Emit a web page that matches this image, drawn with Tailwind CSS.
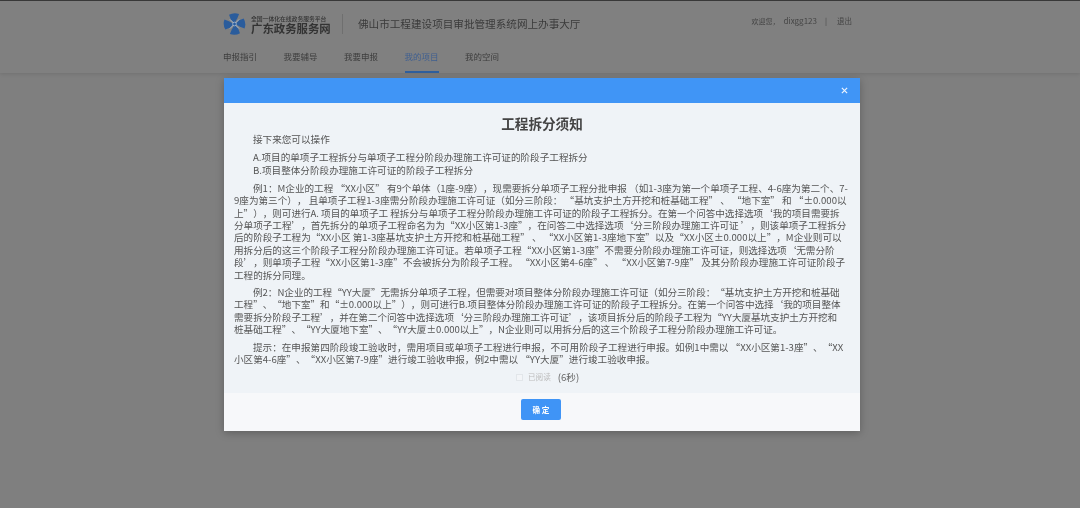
<!DOCTYPE html>
<html lang="zh"><head><meta charset="utf-8"><script src="https://cdn.jsdelivr.net/npm/@tailwindcss/browser@4"></script></head>
<body class="bg-[#7f7f7f]">
<div class="relative h-[508px] w-[1080px] overflow-hidden bg-[#7f7f7f] font-['Noto_Sans_CJK_SC','Noto_Sans',sans-serif] [text-spacing-trim:space-all] blur-[0.35px]">
  <div class="h-px bg-[#3a3a3a]"></div>
  <header class="h-[72px] bg-[#808080] shadow-[0_1px_4px_rgba(0,0,0,0.12)]">
    <div class="flex h-[46px] items-center pl-[223px]">
      <svg viewBox="0 0 24 24" class="h-[22px] w-[23px]" fill="#2a5c9c">
        <path id="b" d="M6 2 Q11 -1 17 1 L15 6 L12 11 L8 7 Z"/>
        <path d="M6 2 Q11 -1 17 1 L15 6 L12 11 L8 7 Z" transform="rotate(90 12 12)"/>
        <path d="M6 2 Q11 -1 17 1 L15 6 L12 11 L8 7 Z" transform="rotate(180 12 12)"/>
        <path d="M6 2 Q11 -1 17 1 L15 6 L12 11 L8 7 Z" transform="rotate(270 12 12)"/>
        <path d="M7 7 17 17M17 7 7 17" stroke="#9fb6d2" stroke-width="1" fill="none"/>
        <circle cx="12" cy="12" r="2" fill="#2a5c9c" stroke="#a9bdd6" stroke-width="0.8"/>
      </svg>
      <div class="ml-[5px] flex w-[84px] flex-col text-[#333]">
        <span class="text-[5.8px] leading-[7px] font-medium whitespace-nowrap">全国一体化在线政务服务平台</span>
        <span class="text-[11.4px] leading-[12px] font-bold whitespace-nowrap">广东政务服务网</span>
      </div>
      <div class="ml-[7px] h-[20px] w-px bg-[#6f6f6f]"></div>
      <div class="ml-[15px] text-[10.6px] whitespace-nowrap text-[#3a3a3a]">佛山市工程建设项目审批管理系统网上办事大厅</div>
      <div class="ml-auto -mt-[6px] flex items-center pr-[228px] text-[7.5px] whitespace-nowrap text-[#444]">
        <span class="text-[7px]">欢迎您，</span><span class="ml-[4px] text-[8px]">dixgg123</span><span class="ml-[8px]">|</span><span class="ml-[10px]">退出</span>
      </div>
    </div>
    <nav class="flex h-[26px] gap-[26.5px] pl-[223px] text-[8.5px] text-[#3c3c3c]">
      <a class="pt-[3px]">申报指引</a><a class="pt-[3px]">我要辅导</a><a class="pt-[3px]">我要申报</a>
      <a class="border-b-2 border-[#2f5f9e] pt-[3px] text-[#3f5f90]">我的项目</a><a class="pt-[3px]">我的空间</a>
    </nav>
  </header>
  <div class="absolute top-[78px] left-[224px] w-[636px] shadow-[0_2px_8px_rgba(0,0,0,0.25)]">
    <div class="flex h-[25px] items-center justify-end bg-[#4095f6] pr-[12px]">
      <svg viewBox="0 0 8 8" class="h-[7px] w-[7px]" stroke="#eaf3fe" stroke-width="1.4"><path d="M1 1 7 7M7 1 1 7"/></svg>
    </div>
    <div class="h-[290px] bg-[#eff3f7] px-[10px] text-[9.6px] leading-[12.4px] whitespace-nowrap text-[#555]">
      <h2 class="pt-[11px] text-center text-[13.6px] leading-[18px] font-bold text-[#444]">工程拆分须知</h2>
      <p class="mt-[1px] indent-[19px]">接下来您可以操作</p>
      <p class="mt-[6px] indent-[19px]">A.项目的单项子工程拆分与单项子工程分阶段办理施工许可证的阶段子工程拆分</p>
      <p class="indent-[19px]">B.项目整体分阶段办理施工许可证的阶段子工程拆分</p>
      <p class="mt-[5.5px] indent-[19px]">例1：M企业的工程 “XX小区” 有9个单体（1座-9座），现需要拆分单项子工程分批申报 （如1-3座为第一个单项子工程、4-6座为第二个、7-<br>9座为第三个）， 且单项子工程1-3座需分阶段办理施工许可证（如分三阶段： “基坑支护土方开挖和桩基础工程” 、 “地下室” 和 “±0.000以<br><span class="tracking-[-0.03px]">上”），则可进行A. 项目的单项子工 程拆分与单项子工程分阶段办理施工许可证的阶段子工程拆分。在第一个问答中选择选项‘我的项目需要拆</span><br>分单项子工程’，首先拆分的单项子工程命名为为“XX小区第1-3座”，在问答二中选择选项‘分三阶段办理施工许可证 ’，则该单项子工程拆分<br>后的阶段子工程为“XX小区 第1-3座基坑支护土方开挖和桩基础工程” 、 “XX小区第1-3座地下室”以及“XX小区±0.000以上”，M企业则可以<br>用拆分后的这三个阶段子工程分阶段办理施工许可证。若单项子工程“XX小区第1-3座”不需要分阶段办理施工许可证，则选择选项‘无需分阶<br>段’，则单项子工程“XX小区第1-3座”不会被拆分为阶段子工程。 “XX小区第4-6座” 、 “XX小区第7-9座” 及其分阶段办理施工许可证阶段子<br>工程的拆分同理。</p>
      <p class="mt-[5px] indent-[19px] tracking-[-0.03px]">例2：N企业的工程“YY大厦”无需拆分单项子工程，但需要对项目整体分阶段办理施工许可证（如分三阶段：“基坑支护土方开挖和桩基础<br>工程”、“地下室”和“±0.000以上”），则可进行B.项目整体分阶段办理施工许可证的阶段子工程拆分。在第一个问答中选择‘我的项目整体<br>需要拆分阶段子工程’，并在第二个问答中选择选项‘分三阶段办理施工许可证’，该项目拆分后的阶段子工程为“YY大厦基坑支护土方开挖和<br>桩基础工程”、“YY大厦地下室”、“YY大厦±0.000以上”，N企业则可以用拆分后的这三个阶段子工程分阶段办理施工许可证。</p>
      <p class="mt-[5px] indent-[19px]">提示：在申报第四阶段竣工验收时，需用项目或单项子工程进行申报，不可用阶段子工程进行申报。如例1中需以 “XX小区第1-3座”、“XX<br>小区第4-6座”、“XX小区第7-9座”进行竣工验收申报，例2中需以 “YY大厦”进行竣工验收申报。</p>
      <div class="mt-[6px] flex items-center pl-[282px]">
        <span class="h-[7px] w-[7px] border border-[#e2e6ea] bg-[#f3f5f8]"></span>
        <span class="ml-[5px] text-[7.6px] text-[#bcbcbc]">已阅读</span>
        <span class="ml-[7px] text-[#666]">(6秒)</span>
      </div>
    </div>
    <div class="flex h-[38px] items-start justify-center bg-[#f7f8fa] pt-[6px] pr-[2px]">
      <button class="h-[21px] w-[40px] rounded-[2px] bg-[#3f94f6] text-[7.6px] font-bold text-white">确 定</button>
    </div>
  </div>
</div>
</body></html>
